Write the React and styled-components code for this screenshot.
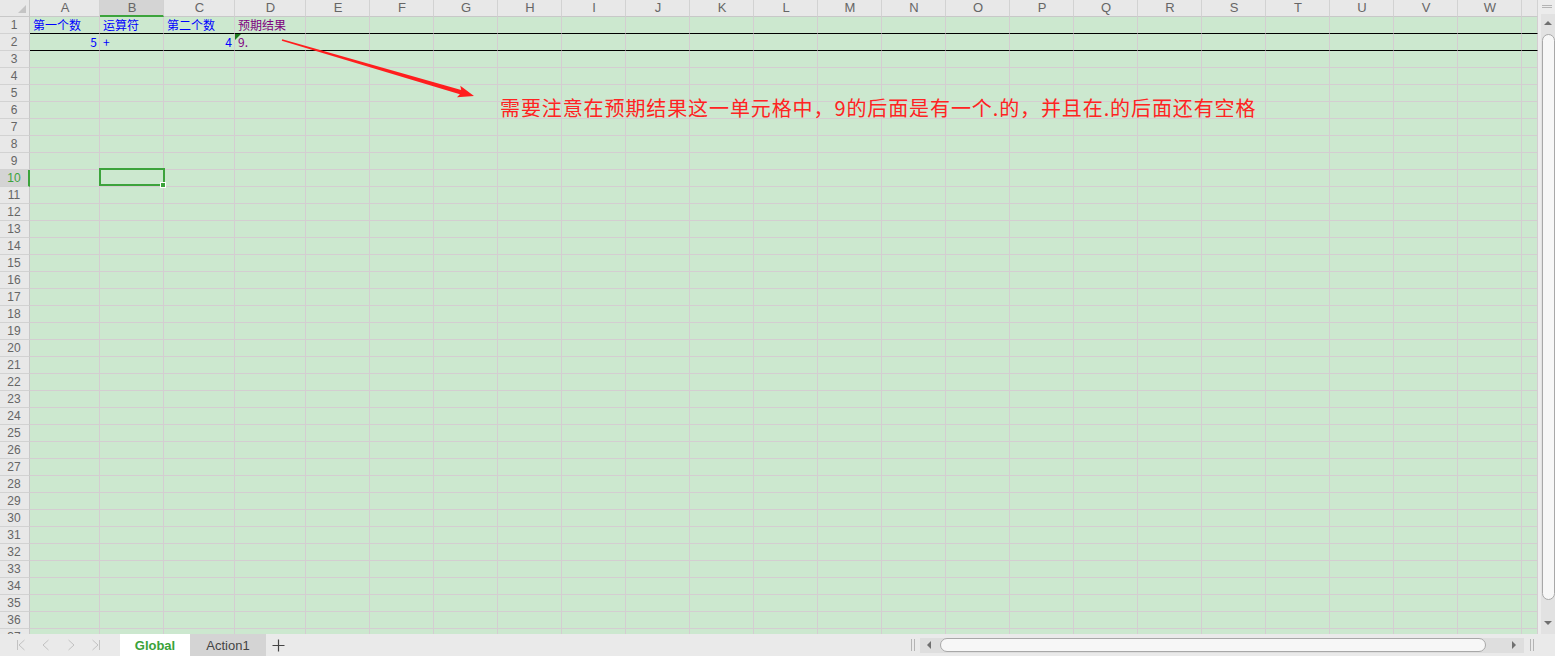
import React from 'react';
import styled, { createGlobalStyle } from 'styled-components';

const GlobalStyle = createGlobalStyle`
  html, body { margin: 0; padding: 0; background: #fff; overflow: hidden; }
  body { font-family: "Liberation Sans", "Noto Sans CJK SC", sans-serif; }
  #root { width: 1555px; height: 656px; }
`;

const GRID = '#d4cdd1';
const GREEN = '#3ca33c';

const COLS = [
  { k: 'A', w: 70 },
  { k: 'B', w: 64 },
  { k: 'C', w: 71 },
  { k: 'D', w: 71 },
  ...'EFGHIJKLMNOPQRSTUVW'.split('').map((k) => ({ k, w: 64 })),
  { k: '', w: 16 },
];

const ROWS = 37;
const SEL_COL = 'B';
const SEL_ROW = 10;

const DATA = {
  'A1': { t: '第一个数', c: '#0000ff' },
  'B1': { t: '运算符', c: '#0000ff' },
  'C1': { t: '第二个数', c: '#0000ff' },
  'D1': { t: '预期结果', c: '#800080' },
  'A2': { t: '5', c: '#0000ff', a: 'right' },
  'B2': { t: '+', c: '#0000ff' },
  'C2': { t: '4', c: '#0000ff', a: 'right' },
  'D2': { t: '9.', c: '#800080', flag: true },
};

const Frame = styled.div`
  width: 1555px;
  height: 656px;
  display: flex;
  flex-direction: column;
  background: #eaeaea;
  overflow: hidden;
`;

const Main = styled.div`
  height: 634px;
  display: flex;
`;

const Sheet = styled.div`
  position: relative;
  flex: 1;
  overflow: hidden;
  background: #cce8cf;
`;

const Grid = styled.div`
  display: grid;
  grid-template-columns: ${(p) => p.$cols};
  grid-auto-rows: 17px;
`;

const Corner = styled.div`
  box-sizing: border-box;
  background: #e8e8e8;
  border-right: 1px solid #c8c8c8;
  border-bottom: 1px solid #c8c8c8;
  display: flex;
  justify-content: flex-end;
  align-items: flex-end;
  padding: 0 3px 3px 0;
`;

const CornerTriangle = styled.span`
  width: 0;
  height: 0;
  border-left: 8px solid transparent;
  border-bottom: 8px solid #c4c4c4;
`;

const ColHeader = styled.div`
  box-sizing: border-box;
  background: ${(p) => (p.$selected ? '#d4d4d4' : '#e8e8e8')};
  border-right: 1px solid #d2d2d2;
  border-bottom: ${(p) => (p.$selected ? `2px solid ${GREEN}` : '1px solid #c8c8c8')};
  font: 13px/16px "Liberation Sans", Arial, sans-serif;
  color: #666;
  text-align: center;
  padding-left: 1px;
  white-space: nowrap;
`;

const RowHeader = styled.div`
  box-sizing: border-box;
  background: ${(p) => (p.$selected ? '#d4d4d4' : '#e8e8e8')};
  border-right: ${(p) => (p.$selected ? `2px solid ${GREEN}` : '1px solid #c8c8c8')};
  border-bottom: 1px solid #d2d2d2;
  font: 12px/16px "Liberation Sans", Arial, sans-serif;
  color: ${(p) => (p.$selected ? GREEN : '#666')};
  text-align: center;
  padding-right: ${(p) => (p.$selected ? '0' : '1px')};
`;

const Cell = styled.div`
  position: relative;
  box-sizing: border-box;
  background: #cce8cf;
  border-right: 1px solid ${GRID};
  border-bottom: 1px solid ${(p) => (p.$heavy ? '#000' : GRID)};
  font: 12px/16px "Noto Sans CJK SC", "Liberation Sans", sans-serif;
  color: ${(p) => p.$color || '#000'};
  text-align: ${(p) => p.$align || 'left'};
  padding: 0 ${(p) => (p.$align === 'right' ? '2px' : '3px')};
  white-space: nowrap;
`;

const CommentFlag = styled.span`
  position: absolute;
  left: 0;
  top: 0;
  width: 0;
  height: 0;
  border-top: 6px solid #1f7a1f;
  border-right: 6px solid transparent;
`;

const Selection = styled.span`
  position: absolute;
  left: -1px;
  top: -2px;
  right: -2px;
  bottom: 0;
  border: 2px solid ${GREEN};
  pointer-events: none;
  z-index: 2;
`;

const FillHandle = styled.span`
  position: absolute;
  right: -3px;
  bottom: -2px;
  width: 4px;
  height: 4px;
  background: ${GREEN};
  border: 1px solid #fff;
  z-index: 3;
`;

const ArrowSvg = styled.svg`
  position: absolute;
  left: 278px;
  top: 35px;
  width: 200px;
  height: 66px;
  pointer-events: none;
`;

const Note = styled.div`
  position: absolute;
  left: 500px;
  top: 96px;
  font: 20px/24px "Noto Sans CJK SC", "Liberation Sans", sans-serif;
  letter-spacing: 0.9px;
  color: #ff2323;
  white-space: nowrap;
`;

/* vertical scrollbar */
const VScroll = styled.div`
  width: 17px;
  display: flex;
  flex-direction: column;
  background: #ececec;
`;

const VGrip = styled.div`
  height: 14px;
  display: flex;
  flex-direction: column;
  align-items: center;
  justify-content: flex-start;
  padding-top: 5px;
  box-sizing: border-box;
  gap: 1px;
  & > span {
    width: 10px;
    height: 1px;
    background: #b4b4b4;
  }
`;

const VTrack = styled.div`
  flex: 1;
  margin-left: 3px;
  background: #e2e2e2;
  display: flex;
  flex-direction: column;
  align-items: center;
`;

const ArrowBox = styled.div`
  width: ${(p) => p.$w || '14px'};
  height: ${(p) => p.$h || '18px'};
  display: flex;
  align-items: center;
  justify-content: center;
  flex-shrink: 0;
`;

const Tri = styled.span`
  width: 0;
  height: 0;
  ${(p) =>
    p.$dir === 'up'
      ? `border-left: 4px solid transparent; border-right: 4px solid transparent; border-bottom: 4px solid #707070;`
      : p.$dir === 'down'
      ? `border-left: 4px solid transparent; border-right: 4px solid transparent; border-top: 4px solid #707070;`
      : p.$dir === 'left'
      ? `border-top: 4px solid transparent; border-bottom: 4px solid transparent; border-right: 4px solid #707070;`
      : `border-top: 4px solid transparent; border-bottom: 4px solid transparent; border-left: 4px solid #707070;`}
`;

const VThumb = styled.div`
  box-sizing: border-box;
  width: 13px;
  height: 566px;
  margin-top: 2px;
  background: #f7f7f7;
  border: 1px solid #a8a8a8;
  border-radius: 7px;
`;

const Spacer = styled.div`
  flex: 1;
`;

const VEnd = styled.div`
  height: 2px;
`;

/* bottom bar */
const BottomBar = styled.div`
  height: 22px;
  display: flex;
  align-items: stretch;
  background: #eaeaea;
`;

const NavGroup = styled.div`
  display: flex;
  align-items: center;
  padding-left: 8px;
  width: 112px;
`;

const NavBtn = styled.div`
  width: 25px;
  height: 22px;
  display: flex;
  align-items: center;
  justify-content: center;
`;

const Tabs = styled.div`
  display: flex;
  align-items: stretch;
`;

const Tab = styled.div`
  width: ${(p) => p.$w}px;
  display: flex;
  align-items: center;
  justify-content: center;
  background: ${(p) => (p.$active ? '#ffffff' : '#d4d4d4')};
  color: ${(p) => (p.$active ? '#3aa23a' : '#444')};
  font: ${(p) => (p.$active ? 'bold' : 'normal')} 13px "Liberation Sans", Arial, sans-serif;
`;

const AddBtn = styled.div`
  width: 24px;
  display: flex;
  align-items: center;
  justify-content: center;
`;

const HScroll = styled.div`
  margin-left: auto;
  width: 650px;
  display: flex;
  align-items: center;
`;

const HGrip = styled.div`
  width: 15px;
  height: 22px;
  display: flex;
  align-items: center;
  justify-content: center;
  gap: 2px;
  & > span {
    width: 1px;
    height: 12px;
    background: #b4b4b4;
  }
`;

const HTrack = styled.div`
  width: 604px;
  height: 15px;
  background: #dedede;
  display: flex;
  align-items: center;
`;

const HThumb = styled.div`
  box-sizing: border-box;
  width: 546px;
  height: 14px;
  margin-left: 2px;
  background: #f7f7f7;
  border: 1px solid #a8a8a8;
  border-radius: 7px;
`;

const HEnd = styled.div`
  width: 16px;
`;

const Chevron = ({ d }) => (
  <svg width="12" height="12" viewBox="0 0 12 12" fill="none" stroke="#c2c2c2" strokeWidth="1">
    <path d={d} />
  </svg>
);

export default function App() {
  const cols = '30px ' + COLS.map((c) => `${c.w}px`).join(' ');
  const cells = [];
  cells.push(
    <Corner key="corner">
      <CornerTriangle />
    </Corner>
  );
  COLS.forEach((c, i) => {
    cells.push(
      <ColHeader key={`h${i}`} $selected={c.k === SEL_COL}>
        {c.k}
      </ColHeader>
    );
  });
  for (let r = 1; r <= ROWS; r++) {
    cells.push(
      <RowHeader key={`r${r}`} $selected={r === SEL_ROW}>
        {r}
      </RowHeader>
    );
    COLS.forEach((c, i) => {
      const id = `${c.k}${r}`;
      const d = c.k ? DATA[id] : null;
      const sel = c.k === SEL_COL && r === SEL_ROW;
      cells.push(
        <Cell
          key={`c${r}-${i}`}
          $heavy={r === 1 || r === 2}
          $color={d && d.c}
          $align={d && d.a}
        >
          {d && d.flag && <CommentFlag />}
          {d && d.t}
          {sel && (
            <>
              <Selection />
              <FillHandle />
            </>
          )}
        </Cell>
      );
    });
  }

  return (
    <>
      <GlobalStyle />
      <Frame>
        <Main>
          <Sheet>
            <Grid $cols={cols}>{cells}</Grid>
            <ArrowSvg viewBox="0 0 200 66">
              <polygon
                fill="#ff1e1e"
                points="4.2,4.2 183.2,55 182.3,50.8 196,61 179,62.3 181.9,59.2 3.8,5.8"
              />
            </ArrowSvg>
            <Note>需要注意在预期结果这一单元格中，9的后面是有一个.的，并且在.的后面还有空格</Note>
          </Sheet>
          <VScroll>
            <VGrip>
              <span />
              <span />
            </VGrip>
            <VTrack>
              <ArrowBox>
                <Tri $dir="up" />
              </ArrowBox>
              <VThumb />
              <Spacer />
              <ArrowBox>
                <Tri $dir="down" />
              </ArrowBox>
              <VEnd />
            </VTrack>
          </VScroll>
        </Main>
        <BottomBar>
          <NavGroup>
            <NavBtn>
              <Chevron d="M2.5 1v10M9.5 1L4 6l5.5 5" />
            </NavBtn>
            <NavBtn>
              <Chevron d="M8.5 1L3 6l5.5 5" />
            </NavBtn>
            <NavBtn>
              <Chevron d="M3.5 1L9 6l-5.5 5" />
            </NavBtn>
            <NavBtn>
              <Chevron d="M9.5 1v10M2.5 1L8 6l-5.5 5" />
            </NavBtn>
          </NavGroup>
          <Tabs>
            <Tab $w={70} $active>
              Global
            </Tab>
            <Tab $w={76}>Action1</Tab>
          </Tabs>
          <AddBtn>
            <svg width="13" height="13" viewBox="0 0 13 13" stroke="#444" strokeWidth="1.2">
              <path d="M6.5 0.5v12M0.5 6.5h12" />
            </svg>
          </AddBtn>
          <HScroll>
            <HGrip>
              <span />
              <span />
            </HGrip>
            <HTrack>
              <ArrowBox $w="18px" $h="15px">
                <Tri $dir="left" />
              </ArrowBox>
              <HThumb />
              <Spacer />
              <ArrowBox $w="20px" $h="15px">
                <Tri $dir="right" />
              </ArrowBox>
            </HTrack>
            <HGrip>
              <span />
              <span />
            </HGrip>
            <HEnd />
          </HScroll>
        </BottomBar>
      </Frame>
    </>
  );
}
